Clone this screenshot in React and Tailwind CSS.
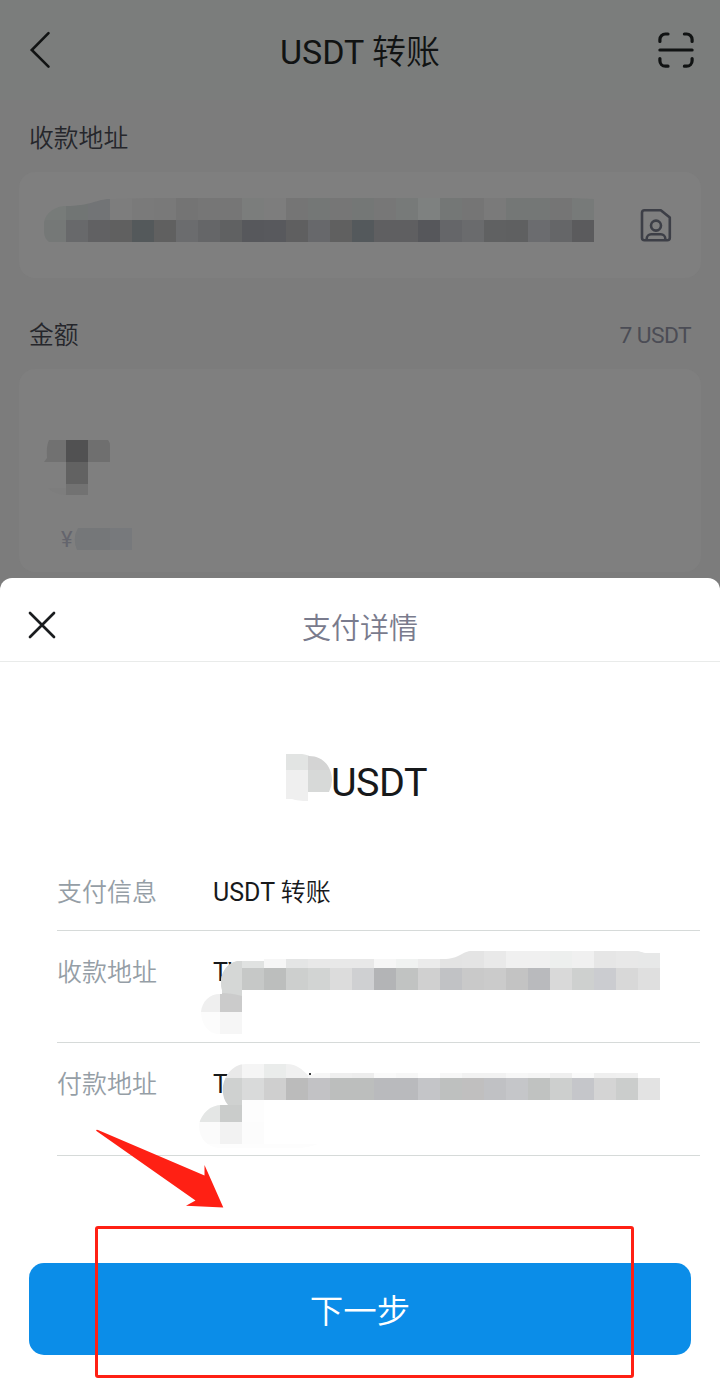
import React from "react";

const CELL = 22;

// a single line of mosaic cells, one colour per cell
const CellRow = ({ x = 0, y, height = CELL, colors }) =>
  colors.map((color, i) => (
    <rect
      key={i}
      x={x + i * CELL}
      y={y}
      width={CELL}
      height={height}
      fill={color}
      shapeRendering="crispEdges"
    />
  ));

const Mosaic = ({ id, width, height, clip, className, children }) => (
  <svg
    width={width}
    height={height}
    viewBox={`0 0 ${width} ${height}`}
    className={className}
    aria-hidden="true"
  >
    <clipPath id={id}>
      <path d={clip} />
    </clipPath>
    <g clipPath={`url(#${id})`}>{children}</g>
  </svg>
);

const addressTop = [
  "#777b79", "#717574", "#727476", "#7d7d7d", "#7a7a7a", "#797979", "#747474",
  "#767676", "#767676", "#7b7d7c", "#7d7d7d", "#757575", "#747776", "#767676",
  "#747776", "#777777", "#777a79", "#7e8180", "#747776", "#757575", "#7a7a7a",
  "#747776", "#747776", "#757575", "#777a79",
];

const addressBottom = [
  "#757877", "#68696b", "#616163", "#606060", "#54595b", "#606060", "#6b6c6e",
  "#656668", "#606162", "#57585c", "#58595d", "#5f5f60", "#67686b", "#606060",
  "#54595c", "#5f5f61", "#5f5f61", "#56575b", "#656669", "#6a6b6d", "#606162",
  "#5f6061", "#6b6c6f", "#656668", "#5b5b5d",
];

const payeeTop = [
  "#d5d7d6", "#e0e2e1", "#f6f6f6", "#e4e5e5", "#e8e8e8", "#e8e8e8", "#e8e8e8",
  "#f6f6f6", "#f0f2f1", "#ebebeb", "#e3e3e3", "#e4e4e4", "#e9e9e9", "#f0f0f0",
  "#f0f0f0", "#edefee", "#f0f0f0", "#e6e6e6", "#e8e8e8", "#e7e8e8",
];

const payeeBottom = [
  "#d5d7d6", "#c6c8c7", "#bcbebd", "#cdcfce", "#d2d4d3", "#dcdcdc", "#cfd0d2",
  "#b3b4b6", "#c1c3c2", "#d0d0d0", "#c1c2c5", "#c9c9c9", "#cbcbcb", "#c3c3c3",
  "#b9babd", "#d9d9d9", "#ced0cf", "#cbccd0", "#d8d8d8", "#dfdfdf",
];

const payerTop = [
  "#e9e9e9", "#f5f5f5", "#eaeceb", "#f0f0f0", "#f6f6f6", "#efefef", "#ededed",
  "#fafafa", "#f7f7f7", "#fdfdfd", "#f7f7f7", "#f2f2f2", "#f2f2f2", "#f7f7f7",
  "#f5f5f5", "#efefef", "#fafafa", "#efefef", "#f0f0f0", "#ffffff",
];

const payerBottom = [
  "#cfd1d0", "#d9dada", "#cfcfcf", "#bbbbbb", "#c2c2c5", "#bcbebd", "#bcbebd",
  "#b9babd", "#b9babd", "#c4c5c8", "#bec0bf", "#c0bfbf", "#c0c1c4", "#c5c6c9",
  "#c0c2c1", "#cdcfce", "#c5c6ca", "#d4d4d4", "#cbcdcc", "#e3e3e3",
];

const PayeeMosaic = () => (
  <Mosaic
    id="payee"
    width={462}
    height={90}
    className="absolute left-[141px] top-5"
    clip="M24 39 C20 24 29 10 42 10 H66 V8 H245 C262 8 264 0 274 0 H438 C443 0 444 2 449 2 H462 V39 H44 V83 H20 C10 83 3 72 3 61 C4 50 12 42 24 43 Z"
  >
    <CellRow x={22} y={0} height={17} colors={payeeTop} />
    <CellRow x={22} y={17} colors={payeeBottom} />
    <rect x="22" y="10" width="22" height="35" fill="#d5d7d6" />
    <rect x="0" y="41" width="22" height="20" fill="#efefef" />
    <path d="M22 42 Q34 42 44 45 V61 H22 Z" fill="#cbcbcb" />
    <CellRow y={61} colors={["#fcfcfc", "#f6f6f6"]} />
  </Mosaic>
);

const PayerMosaic = () => (
  <Mosaic
    id="payer"
    width={462}
    height={86}
    className="absolute left-[141px] top-[21px]"
    clip="M30 41 C18 27 28 0 48 0 H88 C100 0 104 6 110 11 H114 L118 9 H462 V36 H66 V80 H120 Q110 84 98 84 H24 C8 84 1 74 1 60 C4 49 12 41 24 41 Z M111 9 V11 H113 V9 Z"
  >
    <CellRow x={22} y={0} height={14} colors={payerTop} />
    <CellRow x={22} y={14} colors={payerBottom} />
    <rect x="22" y="36" width="22" height="6" fill="#cfd1d0" />
    <rect x="0" y="41" width="22" height="17" fill="#e4e6e5" />
    <path d="M22 41 H44 V58 H22 Z" fill="#cacccb" />
    <rect x="44" y="36" width="22" height="44" fill="#fdfdfd" />
    <CellRow y={58} colors={["#fbfbfb", "#f2f2f2", "#fcfcfc"]} />
    <rect x="0" y="80" width="122" height="6" fill="#fdfdfd" />
    <rect x="111" y="9" width="2" height="2" fill="#3a3c3e" />
  </Mosaic>
);

const BackIcon = () => (
  <svg width="24" height="40" viewBox="0 0 24 40" fill="none">
    <path
      d="M20.5 3.2 3.8 20 20.5 36.6"
      stroke="#111313"
      strokeWidth="2.6"
      strokeLinecap="round"
    />
  </svg>
);

const ScanIcon = () => (
  <svg
    width="40"
    height="40"
    viewBox="0 0 40 40"
    fill="none"
    stroke="#111313"
    strokeWidth="3.2"
    strokeLinecap="round"
  >
    <path d="M3.9 11.5V9.5a5.5 5.5 0 0 1 5.5-5.5H12M28.4 4h2.2a5.5 5.5 0 0 1 5.5 5.5v2M36.1 28.6v2.1a5.5 5.5 0 0 1-5.5 5.5h-2.2M12 36.2H9.4a5.5 5.5 0 0 1-5.5-5.5v-2.1M3.9 20h32.2" />
  </svg>
);

const ContactIcon = () => (
  <svg
    width="32"
    height="34"
    viewBox="0 0 32 34"
    fill="none"
    stroke="#3d3f47"
    strokeWidth="2.6"
    strokeLinejoin="round"
  >
    <path d="M4.5 2.2h16.3L29.8 9.6v20.2a2.5 2.5 0 0 1-2.5 2.5H4.5A2.5 2.5 0 0 1 2 29.8V4.7a2.5 2.5 0 0 1 2.5-2.5Z" />
    <circle cx="16" cy="17.6" r="5" />
    <path d="M6.7 32v-1.2a4.5 4.5 0 0 1 4.5-4.5h9.6a4.5 4.5 0 0 1 4.5 4.5V32" />
  </svg>
);

const CloseIcon = () => (
  <svg width="30" height="30" viewBox="0 0 30 30" fill="none">
    <path
      d="M3 3 27 27M27 3 3 27"
      stroke="#1a1c1e"
      strokeWidth="2.7"
      strokeLinecap="round"
    />
  </svg>
);

const DetailRow = ({ label, value, className, children }) => (
  <div
    className={`relative flex border-b border-[#d6dad9] text-[25px] leading-[36px] ${className}`}
  >
    <dt className="w-[156px] shrink-0 text-[#959ea6]">{label}</dt>
    <dd className="text-[#17191b]">{value}</dd>
    {children}
  </div>
);

const TransferForm = () => (
  <div className="h-[598px] overflow-hidden bg-[#7c7c7c]">
    <header className="flex h-[100px] items-center justify-between bg-[#7b7d7c] pl-7 pr-6">
      <button aria-label="返回" className="flex w-9">
        <BackIcon />
      </button>
      <h1 className="pt-1 text-[34px] leading-[48px] text-[#111313]">
        USDT 转账
      </h1>
      <button aria-label="扫一扫">
        <ScanIcon />
      </button>
    </header>
    <section className="px-[19px]">
      <h2 className="pl-2.5 pt-[21px] text-[24.8px] leading-[36px] text-[#25262b]">
        收款地址
      </h2>
      <div className="mt-[15px] flex h-[106px] items-center justify-between rounded-2xl bg-[#7f7f7f] pl-[25px] pr-[29px]">
        <Mosaic
          id="address"
          width={550}
          height={44}
          className="mb-2.5"
          clip="M0 24 C2 14 12 8 22 8 C46 8 54 1 66 1 L110 0 H528 L550 1 V44 H5 Q0 40 0 34 Z"
        >
          <CellRow y={0} colors={addressTop} />
          <CellRow y={22} colors={addressBottom} />
        </Mosaic>
        <ContactIcon />
      </div>
    </section>
    <section className="px-[19px] pt-10">
      <div className="flex items-center justify-between px-2.5">
        <h2 className="text-[24.8px] leading-[36px] text-[#25262b]">金额</h2>
        <span className="pb-px text-[22.8px] leading-[35px] tracking-[-0.6px] text-[#4b4c55]">
          7 USDT
        </span>
      </div>
      <div className="mt-[15px] h-[203px] rounded-2xl bg-[#7f7f7f] pl-[25px] pt-[71px]">
        <Mosaic
          id="amount"
          width={66}
          height={56}
          clip="M5 0 H64 Q66 2 66 6 V22 H44 V55 H22 Q10 54 4 48 H22 V22 H0 L3 18 Q2 6 5 0 Z"
        >
          <CellRow y={0} colors={["#717171", "#515152", "#6f6f6f"]} />
          <CellRow y={22} colors={["#7f7f7f", "#626262"]} />
          <CellRow y={44} height={12} colors={["#7d7d7d", "#727272"]} />
        </Mosaic>
        <div className="flex items-center pl-[17px] pt-[31px]">
          <span className="w-[13px] pt-0.5 text-[22px] leading-[22px] text-[#64656d]">
            ¥
          </span>
          <Mosaic
            id="fiat"
            width={58}
            height={22}
            clip="M4 0 H58 V22 H3 Q-2 10 4 0 Z"
          >
            <CellRow
              x={-8}
              y={0}
              colors={["#757779", "#757779", "#77797c"]}
            />
          </Mosaic>
        </div>
      </div>
    </section>
  </div>
);

const PaymentSheet = () => (
  <section className="relative -mt-5 flex h-[808px] flex-col rounded-t-[12px] bg-white">
    <header className="flex h-[84px] shrink-0 items-center border-b border-[#e9ebea] px-[27px] pt-3">
      <button aria-label="关闭" className="mb-0.5 w-[30px]">
        <CloseIcon />
      </button>
      <h2 className="grow pr-[30px] pt-1.5 text-center text-[29px] leading-[42px] text-[#797b8d]">
        支付详情
      </h2>
    </header>
    <div className="flex items-start pl-[286px] pt-[92px]">
      <Mosaic
        id="total"
        width={46}
        height={48}
        clip="M0 0 H16 Q22 1 23 2 C38 2 46 14 46 26 Q46 32 43 38 H22 V47 Q12 47 6 45 H0 Z"
      >
        <rect width="22" height="16" fill="#e2e4e3" />
        <rect y="16" width="22" height="32" fill="#efefef" />
        <rect x="22" width="24" height="16" fill="#d4d4d4" />
        <rect x="22" y="16" width="24" height="22" fill="#d7d9d8" />
      </Mosaic>
      <span className="-ml-px pt-[5px] text-[39.5px] leading-[48px] tracking-[-0.5px] text-[#17191b]">
        USDT
      </span>
    </div>
    <dl className="ml-[57px] mr-5 mt-[54px]">
      <DetailRow
        label="支付信息"
        value="USDT 转账"
        className="h-[70px] pt-3.5"
      />
      <DetailRow label="收款地址" value="TV" className="h-[112px] pt-6">
        <PayeeMosaic />
      </DetailRow>
      <DetailRow label="付款地址" value="T" className="h-[113px] pt-6">
        <PayerMosaic />
      </DetailRow>
    </dl>
    <button className="mx-[29px] mt-[107px] h-[92px] shrink-0 rounded-[15px] bg-[#0b8de8] pt-1.5 text-[33.5px] leading-[48px] text-white">
      下一步
    </button>
  </section>
);

const App = () => {
  return (
    <main className="relative h-[1386px] w-[720px] overflow-hidden bg-white font-[Roboto,'Noto_Sans_CJK_SC_DemiLight','Noto_Sans_CJK_SC',sans-serif]">
      <TransferForm />
      <PaymentSheet />
      <svg
        width="130"
        height="80"
        viewBox="0 0 130 80"
        className="absolute left-[95px] top-[1129px]"
      >
        <path
          d="M1 1.2Q1.5.4 3 1L109.5 46.5V36L128.3 78.6 91 76.8 100.5 71.5 1.8 2.2Z"
          fill="#ff2014"
        />
      </svg>
      <div className="absolute left-[95px] top-[1226px] h-[152px] w-[539px] rounded-[3px] border-3 border-[#ff2014]" />
    </main>
  );
};

export default App;
